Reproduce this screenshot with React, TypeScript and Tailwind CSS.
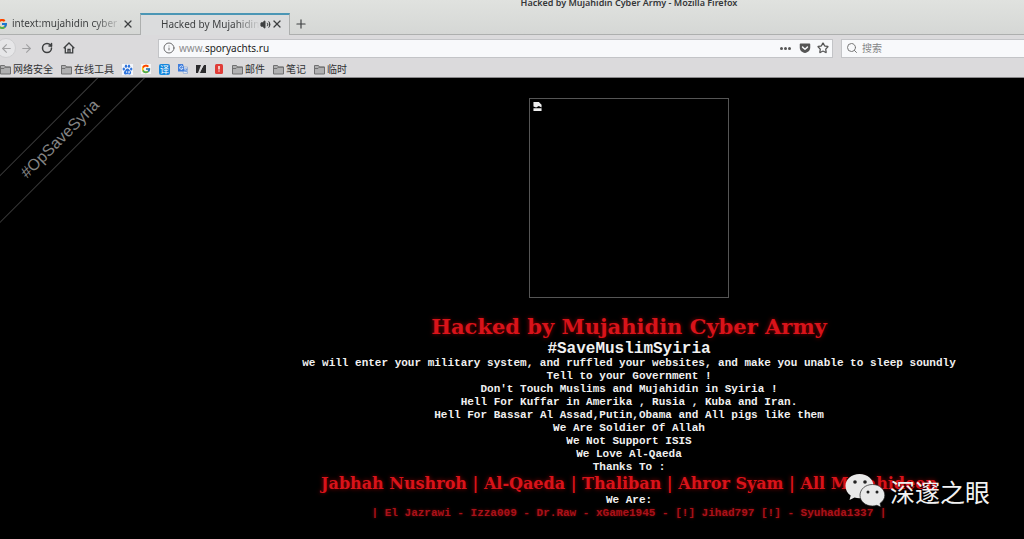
import { ArrowLeft, ArrowRight, Info, Plus, RotateCw, Search, Star, Volume2, X } from 'lucide-react';
import { FcGoogle } from 'react-icons/fc';
import { FaGetPocket } from 'react-icons/fa6';

const lines = [
  'we will enter your military system, and ruffled your websites, and make you unable to sleep soundly',
  'Tell to your Government !',
  "Don't Touch Muslims and Mujahidin in Syiria !",
  'Hell For Kuffar in Amerika , Rusia , Kuba and Iran.',
  'Hell For Bassar Al Assad,Putin,Obama and All pigs like them',
  'We Are Soldier Of Allah',
  'We Not Support ISIS',
  'We Love Al-Qaeda',
  'Thanks To :',
];

function Folder() {
  return (
    <svg viewBox="0 0 12 11" className="h-[11px] w-3 shrink-0" fill="#b0b0b1" stroke="#707071" aria-hidden="true">
      <path d="M.5 10V1.500h4l1 1.500h5V10z" />
      <path d="M.5 4.500h3.500l1.200-1.300h5.300" fill="none" />
    </svg>
  );
}

function FolderLink({ label }: { label: string }) {
  return (
    <a href="#" className="flex items-center gap-px whitespace-nowrap">
      <Folder />
      {label}
    </a>
  );
}

function TabBar() {
  return (
    <div role="tablist" className="flex h-[22px] items-stretch text-[10px] text-[#3d3f40]">
      <div className="flex w-[140px] shrink-0 items-center border-b border-[#adafae] pr-1.5">
        <FcGoogle className="-ml-1 mr-1 size-3 shrink-0" />
        <button role="tab" aria-selected="false" className="min-w-0 flex-1 overflow-hidden whitespace-nowrap text-left [mask-image:linear-gradient(to_right,#000_75%,transparent)]">
          intext:mujahidin cyber army
        </button>
        <button aria-label="Close tab">
          <X size={12} strokeWidth={2.5} />
        </button>
      </div>
      <div className="flex w-[150px] shrink-0 items-center border-x border-t-2 border-x-[#adafae] border-t-[#4b96b5] bg-[#dbdcdd] pb-0.5 pl-5 pr-1.5">
        <button role="tab" aria-selected="true" className="min-w-0 flex-1 overflow-hidden whitespace-nowrap text-left [mask-image:linear-gradient(to_right,#000_75%,transparent)]">
          Hacked by Mujahidin Cyber Army
        </button>
        <button aria-label="Mute tab">
          <Volume2 size={11} fill="#3d3f40" />
        </button>
        <button aria-label="Close tab">
          <X size={12} strokeWidth={2.5} />
        </button>
      </div>
      <div className="flex flex-1 items-center border-b border-[#adafae] pl-1">
        <button aria-label="New tab">
          <Plus size={14} />
        </button>
      </div>
    </div>
  );
}

function NavBar() {
  return (
    <div className="flex h-[26px] items-center text-[10px] text-[#3d3f40]">
      <div className="flex w-[158px] shrink-0 items-center">
        <button aria-label="Back" className="-ml-1 flex size-5 items-center justify-center rounded-full border border-[#cfcfd1] bg-[#e6e6e8] text-[#a0a0a2]">
          <ArrowLeft size={13} />
        </button>
        <button aria-label="Forward" className="ml-1 text-[#a0a0a2]">
          <ArrowRight size={13} />
        </button>
        <button aria-label="Reload" className="ml-2">
          <RotateCw size={12} strokeWidth={3} />
        </button>
        <button aria-label="Home" className="ml-2.5">
          <svg viewBox="0 0 12 12" className="size-3" fill="none" stroke="#3d3f40" strokeWidth="1.300">
            <path d="M.7 6.300 6 1l5.300 5.300M2.300 5.500v5.300h7.400V5.500" />
            <path d="M5 11V7.500h2V11" />
          </svg>
        </button>
      </div>
      <div className="flex h-[19px] flex-1 items-center border border-[#c3c4c7] bg-[#f8f9fb] pl-1 pr-[3px]">
        <Info size={12} className="text-[#6b6b6d]" />
        <a href="#" className="ml-1 flex-1 text-[#8b8b8d]">
          www.<span className="text-[#222]">sporyachts.ru</span>
        </a>
        <button aria-label="Page actions" className="flex gap-px">
          <i className="size-[3px] rounded-full bg-[#555]" />
          <i className="size-[3px] rounded-full bg-[#555]" />
          <i className="size-[3px] rounded-full bg-[#555]" />
        </button>
        <button aria-label="Save to Pocket" className="ml-2">
          <FaGetPocket size={12} color="#555" />
        </button>
        <button aria-label="Bookmark" className="ml-1.5">
          <Star size={12} strokeWidth={2.5} color="#555" />
        </button>
      </div>
      <label className="ml-2 flex h-[19px] w-[183px] shrink-0 items-center gap-1 border border-r-0 border-[#c3c4c7] bg-[#f8f9fb] pl-1">
        <Search size={12} className="shrink-0 text-[#777]" />
        <input aria-label="搜索" placeholder="搜索" className="w-full min-w-0 bg-transparent outline-none placeholder:text-[#858587]" />
      </label>
    </div>
  );
}

function Bookmarks() {
  return (
    <nav className="flex h-[17px] items-center gap-2 border-b border-[#89888a] text-[10px] leading-4 text-[#303133]">
      <FolderLink label="网络安全" />
      <FolderLink label="在线工具" />
      <a href="#" aria-label="Baidu" className="bg-[#f4f6fb]">
        <svg viewBox="0 0 11 11" className="size-[11px]" fill="#2f74dc">
          <ellipse cx="1.800" cy="5" rx="1.200" ry="1.500" />
          <ellipse cx="4" cy="2.200" rx="1.200" ry="1.600" />
          <ellipse cx="7" cy="2.200" rx="1.200" ry="1.600" />
          <ellipse cx="9.200" cy="5" rx="1.200" ry="1.500" />
          <path d="M5.500 4.500c1.500 0 1.800 1.500 2.800 2.400 1.600 1.500.6 3.600-1 3.500-1.300-.1-2.300-.1-3.600 0-1.600.1-2.600-2-1-3.500 1-.9 1.300-2.400 2.800-2.400z" />
          <path d="M4.500 7v2M6.300 7v2h1.200V7" fill="none" stroke="#fff" strokeWidth=".6" />
        </svg>
      </a>
      <a href="#" aria-label="Google" className="bg-[#f4f4f6]">
        <FcGoogle size={10} />
      </a>
      <a href="#" className="flex size-[11px] items-center justify-center rounded-xs bg-[#1787dc] text-[9px] leading-none text-white">
        译
      </a>
      <a href="#" aria-label="Translate">
        <svg viewBox="0 0 10 10" className="size-[10px]">
          <path d="M4 3h5.500v6.500H5.500z" fill="#e4e8f0" stroke="#7f9fd0" strokeWidth=".6" />
          <path d="M0 0h5l2 7.500H0z" fill="#3f7ddb" />
          <path d="M4.800 2.700A1.700 1.700 0 1 0 5 4.200H3.500" fill="none" stroke="#fff" strokeWidth=".8" />
          <path d="M6.700 5h2.600M8.800 5c-.3 1.500-1 2.300-1.800 3M7.300 6l1.700 2.300" fill="none" stroke="#3f7ddb" strokeWidth=".7" />
        </svg>
      </a>
      <a href="#" aria-label="Notes">
        <svg viewBox="0 0 10 10" className="size-[10px]" fill="#2b2b2d">
          <path d="M0 1h5L2 9H0zM8 1h2v8H3z" />
          <path d="M7.500 0 3 10" stroke="#dcdbdd" />
        </svg>
      </a>
      <a href="#" aria-label="Alerts">
        <svg viewBox="0 0 10 10" className="size-[10px]">
          <rect x="1" width="8" height="10" rx="1.500" fill="#e03c38" />
          <path d="M4 2h2v3.500H4zM4 6.500h2v1H4z" fill="#f6c7c2" />
        </svg>
      </a>
      <FolderLink label="邮件" />
      <FolderLink label="笔记" />
      <FolderLink label="临时" />
    </nav>
  );
}

function Watermark() {
  return (
    <div className="absolute bottom-7 right-[34px] flex items-center gap-1 text-[25px] leading-9 text-[#f2f2f2]">
      <svg viewBox="0 0 41 34" className="mb-1 h-[34px] w-[41px]" fill="#e9e9e9" aria-hidden="true">
        <path d="M14.500 1C6.500 1 .5 6.200.5 13c0 4 2 7.300 5.200 9.500L4.500 27l5-2.500c1.600.5 3.300.8 5 .8 8 0 14-5.300 14-12.300S22.500 1 14.500 1z" />
        <path
          d="M27.500 11.500c-7.200 0-12.500 4.800-12.500 10.800S20.300 33 27.500 33c1.500 0 3-.2 4.300-.7L36 34l-1-3.600c3-2 4.800-4.900 4.800-8.100 0-6-5.300-10.800-12.300-10.800z"
          stroke="#222"
          strokeWidth=".7"
        />
        <g fill="#222">
          <circle cx="10" cy="9" r="1.800" />
          <circle cx="20" cy="9" r="1.800" />
          <circle cx="23" cy="19" r="1.500" />
          <circle cx="32" cy="19" r="1.500" />
        </g>
      </svg>
      <span>深邃之眼</span>
    </div>
  );
}

export default function App() {
  return (
    <div className="flex min-h-screen flex-col overflow-hidden bg-black font-['Noto_Sans','Noto_Sans_CJK_SC',sans-serif]">
      <header className="bg-[#dbdadc]">
        <div className="bg-linear-to-b from-[#e0e2df] to-[#d5d7d5]">
          <div className="flex h-[13px] items-end justify-center overflow-hidden pl-[234px]">
            <h2 className="mb-1 text-[9px] leading-3 font-semibold whitespace-nowrap text-[#353738]">
              Hacked by Mujahidin Cyber Army - Mozilla Firefox
            </h2>
          </div>
          <TabBar />
        </div>
        <NavBar />
        <Bookmarks />
      </header>

      <main className="relative flex-1 overflow-hidden pl-[234px] text-center">
        <div className="absolute -left-[90px] top-[44px] flex h-[34px] w-[300px] -rotate-45 items-center justify-center border-y border-[#3c3c3c] font-['Liberation_Sans',sans-serif] text-base text-[#858585]">
          #OpSaveSyria
        </div>

        <div role="img" aria-label="Missing image" className="mx-auto mt-5 size-[200px] border border-[#555] p-[3px]">
          <svg viewBox="0 0 9 10" className="size-[9px]" fill="#eee">
            <path d="M0 0h6l3 3v3L6 4.500 3 6 0 5zM0 7h9v3H0z" />
          </svg>
        </div>

        <h1 className="mt-[15px] font-['DejaVu_Serif',serif] text-[21px] leading-7 font-bold whitespace-nowrap text-[#d8131a] [text-shadow:0_0_4px_#800]">
          Hacked by Mujahidin Cyber Army
        </h1>
        <div className="font-['Liberation_Mono',monospace] text-[11px] leading-[13px] font-bold whitespace-nowrap text-[#f0f0f0]">
          <h2 className="text-base leading-4">#SaveMuslimSyiria</h2>
          {lines.map((line) => (
            <p key={line}>{line}</p>
          ))}
          <p className="font-['DejaVu_Serif',serif] text-base leading-5 text-[#d8131a] [text-shadow:0_0_4px_#800]">
            Jabhah Nushroh | Al-Qaeda | Thaliban | Ahror Syam | All Mujahideen
          </p>
          <p>We Are:</p>
          <p className="text-[#a8121a] [text-shadow:0_0_3px_#700]">
            | El Jazrawi - Izza009 - Dr.Raw - xGame1945 - [!] Jihad797 [!] - Syuhada1337 |
          </p>
        </div>
        <Watermark />
      </main>
    </div>
  );
}
